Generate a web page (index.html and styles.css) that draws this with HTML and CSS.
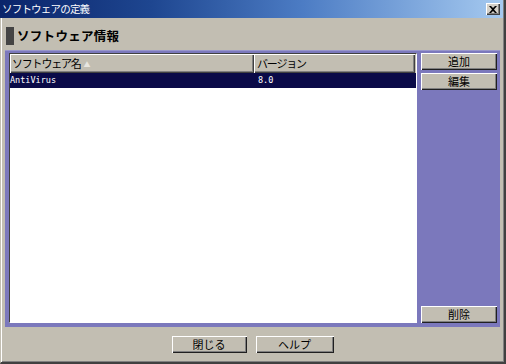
FILE: index.html
```html
<!DOCTYPE html>
<html lang="ja">
<head>
<meta charset="utf-8">
<link rel="stylesheet" href="styles.css">
</head>
<body>
<div class="window">
  <div class="titlebar">
    <span class="title">ソフトウェアの定義</span>
    <span class="close"><svg width="8" height="7" viewBox="0 0 8 7"><path d="M0 0h2l2 2 2-2h2L5 3.5 8 7H6L4 5 2 7H0l3-3.5z" fill="#000"/></svg></span>
  </div>
  <div class="body">
    <div class="heading"><span class="mark"></span><span class="htext">ソフトウェア情報</span></div>
    <div class="panel">
      <div class="list">
        <div class="lhead">
          <div class="hcell c1">ソフトウェア名<span class="sort">▲</span></div>
          <div class="hcell c2">バージョン</div>
          <div class="hfill"></div>
        </div>
        <div class="row sel">
          <div class="cell c1">AntiVirus</div>
          <div class="cell c2">8.0</div>
        </div>
      </div>
      <div class="side">
        <button class="btn">追加</button>
        <button class="btn">編集</button>
        <div class="spacer"></div>
        <button class="btn">削除</button>
      </div>
    </div>
    <div class="footer">
      <button class="btn wide1">閉じる</button>
      <button class="btn wide2">ヘルプ</button>
    </div>
  </div>
</div>
</body>
</html>
```
FILE: styles.css
```css
* { box-sizing: border-box; }
html, body { margin: 0; padding: 0; }
body {
  width: 506px; height: 364px; overflow: hidden;
  font-family: "Noto Sans CJK JP", "DejaVu Sans", sans-serif;
  background: #c2beb2;
}
.window {
  width: 506px; height: 364px;
  display: flex; flex-direction: column;
  background: #c2beb2;
}
.titlebar {
  height: 18px; flex: none;
  background: linear-gradient(to right, #0a246a 0%, #1e4690 30%, #4c7cc4 60%, #a6caf0 100%);
  display: flex; align-items: center; justify-content: space-between;
  padding: 0 4px 0 2px;
  border-right: 2px solid #404040;
  box-shadow: inset -1px 0 0 #808080;
}
.title {
  color: #fff; font-size: 10.5px; letter-spacing: -0.8px; line-height: 18px;
}
.close {
  width: 14px; height: 12px; background: #d4d0c8;
  display: flex; align-items: center; justify-content: center;
  box-shadow: inset 1px 1px 0 #fff, inset -1px -1px 0 #404040, inset -2px -2px 0 #808080;
}
.body {
  flex: 1; display: flex; flex-direction: column;
  border-left: 1px solid #c2beb2;
  border-right: 2px solid #404040;
  border-bottom: 2px solid #404040;
  box-shadow: inset 1px 0 0 #fff, inset -1px -1px 0 #808080;
  padding: 0 4px 0 4px;
}
.heading {
  height: 32px; display: flex; align-items: center; gap: 3px;
  padding-top: 3px;
}
.mark { width: 8px; height: 18px; background: #444; margin-left: 1px; }
.htext { font-size: 12.5px; font-weight: bold; letter-spacing: 0.3px; color: #000; }
.panel {
  height: 277px;
  background: #7b78bc;
  border-top: 1px solid #9896cc;
  padding: 2px 3px 4px 4px;
  display: flex; gap: 4px;
}
.list {
  flex: none; width: 408px;
  background: #fff;
  border-top: 1px solid #404040; border-left: 1px solid #404040;
  border-right: 1px solid #fff; border-bottom: 1px solid #fff;
  display: flex; flex-direction: column;
}
.lhead { height: 19px; display: flex; }
.hcell {
  background: #c2beb2;
  font-size: 11px; letter-spacing: -1.2px; line-height: 18px;
  padding-left: 2px; color: #000;
  box-shadow: inset 1px 1px 0 #fff, inset -1px -1px 0 #404040, inset -2px -2px 0 #808080;
}
.hcell.c1 { width: 244px; }
.hcell.c2 { width: 161px; padding-left: 3px; }
.hfill { flex: 1; background: #c2beb2; }
.sort { font-size: 7px; color: #e8e6e0; margin-left: 3px; vertical-align: 1px; letter-spacing: 0; }
.row { height: 15px; display: flex; }
.row.sel { background: #0a0a48; color: #fff; }
.cell {
  font-family: "DejaVu Sans Mono", monospace; font-size: 8.5px; line-height: 15px;
}
.cell.c1 { width: 247px; padding-left: 0; }
.cell.c2 { padding-left: 1px; }
.side { flex: 1; display: flex; flex-direction: column; gap: 3px; }
.side .btn { width: 100%; }
.spacer { flex: 1; }
.btn {
  height: 17px; width: 77px; padding: 0; margin: 0;
  background: #c2beb2; border: none;
  font-family: "Noto Sans CJK JP", sans-serif; font-size: 11px; color: #000;
  line-height: 17px;
  box-shadow: inset 1px 1px 0 #fff, inset -1px -1px 0 #202020, inset -2px -2px 0 #808080;
}
.footer {
  flex: 1; display: flex; justify-content: center; align-items: center; gap: 9px;
  padding-bottom: 0;
}
.wide1 { width: 75px; }
.wide2 { width: 78px; }
```
